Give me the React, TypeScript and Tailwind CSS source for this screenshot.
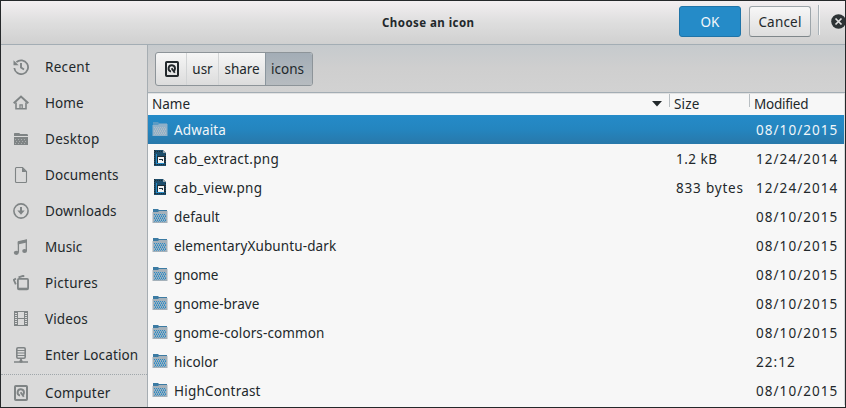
import type { ReactNode } from "react";

const Svg = ({ children, className = "" }: { children: ReactNode; className?: string }) => (
  <svg width="16" height="16" viewBox="0 0 16 16" fill="none" stroke="currentColor" strokeWidth="1.6" className={`shrink-0 ${className}`}>
    {children}
  </svg>
);

const RecentIcon = () => (
  <Svg>
    <path d="M3.4 3.2A6.9 6.9 0 1 1 1.3 9" strokeWidth="1.8" />
    <path d="M0.5 1.2v5h5.2z" fill="currentColor" stroke="none" />
    <path d="M8 4v4.5l3 2" strokeWidth="1.9" />
  </Svg>
);
const HomeIcon = () => (
  <Svg>
    <path d="M0.7 8.3L8 1.6l7.3 6.7" strokeWidth="2" />
    <path d="M3 7.5v6.2h10V7.5" />
    <path d="M7 13.7V9.8h2.2v3.9" strokeWidth="1.3" />
  </Svg>
);
const FolderIcon = () => (
  <Svg>
    <path d="M1 4V2.6L1.6 2h4.6l1 1H14l1 .8V5H1zM1 6h14v8H1z" fill="currentColor" stroke="none" />
    <path d="M2 8.5h12M3 10.5h11M2 12.5h12" stroke="#a9acad" strokeWidth="1" strokeDasharray="1 2" />
  </Svg>
);
const DocumentIcon = () => (
  <Svg>
    <path d="M3 .5h6.5l4 4v10a1 1 0 0 1-1 1h-9a1 1 0 0 1-1-1v-13a1 1 0 0 1 1-1z" strokeWidth="1.1" />
    <path d="M9 .5V5h4.5z" fill="currentColor" stroke="none" />
  </Svg>
);
const DownloadIcon = () => (
  <Svg>
    <circle cx="8" cy="8" r="7.1" strokeWidth="1.6" />
    <path d="M8 4v5" strokeWidth="2" />
    <path d="M4.3 7.6h7.4L8 11.8z" fill="currentColor" stroke="none" />
  </Svg>
);
const MusicIcon = () => (
  <Svg>
    <path d="M5.4 13.5V3.4l7.9-2v10.5" strokeWidth="1.3" />
    <path d="M4.8 2.3L13.9.2v3.4L4.8 5.4z" fill="currentColor" stroke="none" />
    <ellipse cx="3.3" cy="13.8" rx="2.5" ry="2.1" fill="currentColor" stroke="none" />
    <ellipse cx="11.6" cy="12" rx="2.4" ry="2" fill="currentColor" stroke="none" />
  </Svg>
);
const PicturesIcon = () => (
  <Svg>
    <rect x="4.9" y="3.9" width="10.2" height="10.4" rx="1" strokeWidth="1.8" />
    <path d="M5 13.7h10" strokeWidth="2" />
    <path d="M5.5 2.3L10.2.8l1 .8M2.8 9.4L.8 4.8l2.2-1.2" strokeWidth="1.8" />
  </Svg>
);
const VideosIcon = () => (
  <Svg>
    <rect x="1.5" y=".5" width="13" height="14" strokeWidth="1" />
    <path d="M4.5 1v14M11.5 1v14M4 7.5h8" strokeWidth="1" />
    <path d="M3 1v14M13 1v14" strokeWidth="2" strokeDasharray="1 1" />
  </Svg>
);
const ServerIcon = () => (
  <Svg>
    <rect x="3.8" y=".8" width="8.4" height="10.4" rx="1.2" />
    <path d="M4 3.5h8M4 6h8M4 8.5h8" strokeWidth="1.2" />
    <path d="M8 11v3.5M1 15h14" strokeWidth="1.7" />
    <circle cx="8" cy="14.2" r="1.6" fill="currentColor" stroke="none" />
  </Svg>
);
const DiskIcon = ({ className = "" }: { className?: string }) => (
  <Svg className={className}>
    <rect x="2" y="1" width="12" height="14" rx=".8" strokeWidth="2" />
    <path d="M7 10.6A3.2 3.2 0 1 1 11 7.5c0 1-.4 1.7-1 2.2" strokeWidth="1.9" />
    <path d="M7.6 7.2l3.2 4.6" strokeWidth="1.9" />
  </Svg>
);

const FileFolder = ({ selected = false }: { selected?: boolean }) => (
  <svg width="16" height="16" viewBox="0 0 16 16" className="-mt-px shrink-0">
    <path d="M1 1h5l1 1h8v3H1z" fill={selected ? "#5b9bc4" : "#3c7ba3"} />
    <path d="M.5 4H6l1-1h8.5v12H.5z" fill={selected ? "#8fb0c8" : "#a5b1ba"} />
    <path
      d="M2 6.5h12M3 8.5h11M2 10.5h12M3 12.5h11"
      stroke={selected ? "#b3bec6" : "#258bc8"}
      strokeDasharray="1 1"
    />
    <path d="M3 7.5h11M2 9.5h12M3 11.5h11M2 13.5h12" stroke={selected ? "#a9b9c6" : "#4f9bcb"} strokeDasharray="1 1" />
  </svg>
);
const FileImage = () => (
  <svg width="16" height="16" viewBox="0 0 16 16" className="-mt-px shrink-0">
    <path d="M2 0h9l3 3v13H2z" fill="#1d4e6c" />
    <path d="M2.5 0v16M13.5 4v12M3 1.5h8M3 14.5h10" stroke="#1f2c34" strokeDasharray="1 1" />
    <path d="M11 0v3h3z" fill="#9aa6ae" />
    <path d="M4 4h1v9H4zM4 13h8v1H4z" fill="#258bc8" />
    <rect x="5" y="6" width="8" height="7" fill="#1f2c34" />
    <path d="M6 7h6v6H6z" fill="#f4f4f4" />
    <path d="M7 9h4v2h-1v-1H7z" fill="#1f3340" />
  </svg>
);

const places = [
  { name: "Recent", icon: <RecentIcon />, tracking: "tracking-[0.3px]" },
  { name: "Home", icon: <HomeIcon />, tracking: "tracking-[0.05px]" },
  { name: "Desktop", icon: <FolderIcon />, tracking: "tracking-[0.3px]" },
  { name: "Documents", icon: <DocumentIcon />, tracking: "tracking-[0.1px]" },
  { name: "Downloads", icon: <DownloadIcon />, tracking: "tracking-[0.1px]" },
  { name: "Music", icon: <MusicIcon />, tracking: "tracking-[0.05px]" },
  { name: "Pictures", icon: <PicturesIcon />, tracking: "tracking-[0.3px]" },
  { name: "Videos", icon: <VideosIcon />, tracking: "tracking-[0.1px]" },
  { name: "Enter Location", icon: <ServerIcon />, tracking: "tracking-[0.12px]" },
];

const files = [
  { name: "Adwaita", size: "", date: "08/10/2015", tracking: "tracking-[0.15px]" },
  { name: "cab_extract.png", size: "1.2 kB", date: "12/24/2014", tracking: "tracking-[0.3px]" },
  { name: "cab_view.png", size: "833 bytes", date: "12/24/2014", tracking: "tracking-[0.3px]" },
  { name: "default", size: "", date: "08/10/2015", tracking: "tracking-[0.15px]" },
  { name: "elementaryXubuntu-dark", size: "", date: "08/10/2015", tracking: "tracking-[0.12px]" },
  { name: "gnome", size: "", date: "08/10/2015", tracking: "tracking-[-0.2px]" },
  { name: "gnome-brave", size: "", date: "08/10/2015", tracking: "tracking-[0.02px]" },
  { name: "gnome-colors-common", size: "", date: "08/10/2015", tracking: "tracking-[0.1px]" },
  { name: "hicolor", size: "", date: "22:12", tracking: "tracking-[0.05px]" },
  { name: "HighContrast", size: "", date: "08/10/2015", tracking: "tracking-[0.2px]" },
];

export default function App() {
  return (
    <div className="flex h-[408px] w-[846px] flex-col overflow-hidden border border-[#25282a] bg-[#f7f7f7] font-['Noto_Sans','Open_Sans',sans-serif] text-[13.5px] leading-5 whitespace-nowrap text-[#22282b]">
      <header className="flex h-11 shrink-0 border-b border-[#a3adb4] bg-linear-to-b from-[#f3eff1] via-[#dedede] via-50% to-[#d0d0d0]">
        <h1 className="w-[678px] shrink-0 pt-3 pl-[381px] text-[11.5px] font-bold tracking-[0.45px]">Choose an icon</h1>
        <button className="mt-[5px] h-[31px] w-[62px] shrink-0 rounded-[3px] border border-[#1f74a8] bg-[#258bc8] text-[#f4f8fb]">OK</button>
        <button className="mt-[5px] ml-2 h-[31px] w-[62px] shrink-0 rounded-[3px] border border-[#9da5aa] border-b-[#7f878b] bg-linear-to-b from-[#f7f7f7] to-[#dedede] tracking-[0.2px]">Cancel</button>
        <div className="mt-1 ml-[7px] h-[30px] w-[2px] shrink-0 border-r border-l border-r-[#f5f5f5] border-l-[#a9b2b8]" />
        <svg width="15" height="15" viewBox="0 0 15 15" className="mt-[13px] ml-[11px] shrink-0">
          <circle cx="7.5" cy="7.5" r="7.3" fill="#2d3335" />
          <path d="M4.5 4.5l6 6m0-6l-6 6" stroke="#e0e0e0" strokeWidth="1.7" />
        </svg>
      </header>

      <div className="flex min-h-0 flex-1">
        <aside className="w-[147px] shrink-0 border-r border-[#a6adb2] bg-[#dadada] pt-1">
          {places.map((p) => (
            <div key={p.name} className="flex h-9 items-center gap-4 pl-3 text-[#7f8485]">
              {p.icon}
              <span className={`text-[#22282b] ${p.tracking}`}>{p.name}</span>
            </div>
          ))}
          <div className="mt-[1px] border-t border-dotted border-[#9fa6aa]" />
          <div className="flex h-9 items-center gap-4 pl-3 text-[#7f8485]">
            <DiskIcon />
            <span className="tracking-[0.18px] text-[#22282b]">Computer</span>
          </div>
        </aside>

        <main className="flex min-w-0 flex-1 flex-col">
          <div className="h-12 shrink-0 border-b border-[#a3adb4] bg-linear-to-b from-[#c6cacd] via-[#cfcfcf] to-[#d2d2d2] pt-[7px] pl-[7px]">
            <nav className="flex h-[34px] w-[158px] overflow-hidden rounded-[3px] border border-[#8d9499] bg-linear-to-b from-[#f6f6f6] to-[#dcdcdc]">
              <span className="flex w-[30px] items-center pl-2"><DiskIcon /></span>
              <span className="flex w-8 items-center justify-center border-l border-[#d2d4d5]">usr</span>
              <span className="flex w-[47px] items-center justify-center border-l border-[#d2d4d5] tracking-[-0.1px]">share</span>
              <span className="flex flex-1 items-center border-l border-[#8b969e] bg-linear-to-b from-[#a3adb6] to-[#b7bcc0] pl-[5px]">icons</span>
            </nav>
          </div>

          <div className="flex h-[22px] shrink-0 items-start border-t border-r border-[#e2e2e2]">
            <div className="flex w-[521px] justify-between pr-[7px] pl-1">
              <span>Name</span>
              <svg width="10" height="6" viewBox="0 0 10 6" className="mt-[7px]"><path d="M0 0h10L5 5.5z" fill="#22282b" /></svg>
            </div>
            <div className="flex w-20">
              <div className="h-[13px] w-px bg-[#b9bfc3]" />
              <span className="pl-1 tracking-[0.2px]">Size</span>
            </div>
            <div className="flex">
              <div className="h-[13px] w-px bg-[#b9bfc3]" />
              <span className="pl-1 tracking-[-0.25px]">Modified</span>
            </div>
          </div>

          {files.map((f, i) => (
            <div
              key={f.name}
              className={`flex h-[29px] shrink-0 items-center border-r border-[#d5d8da] pl-1 ${i === 0 ? "bg-linear-to-b from-[#258bc8] via-[#2485bf] to-[#2878aa] text-[#f1f6f9]" : ""}`}
            >
              {f.name.endsWith(".png") ? <FileImage /> : <FileFolder selected={i === 0} />}
              <span className={`w-[502px] shrink-0 pl-[6px] ${f.tracking}`}>{f.name}</span>
              <span className={`w-20 shrink-0 pl-[6px] ${f.size === "833 bytes" ? "tracking-[0.8px]" : "tracking-[0.5px]"}`}>{f.size}</span>
              <span className="pl-[6px] tracking-[1.05px]">{f.date}</span>
            </div>
          ))}
        </main>
      </div>
    </div>
  );
}
